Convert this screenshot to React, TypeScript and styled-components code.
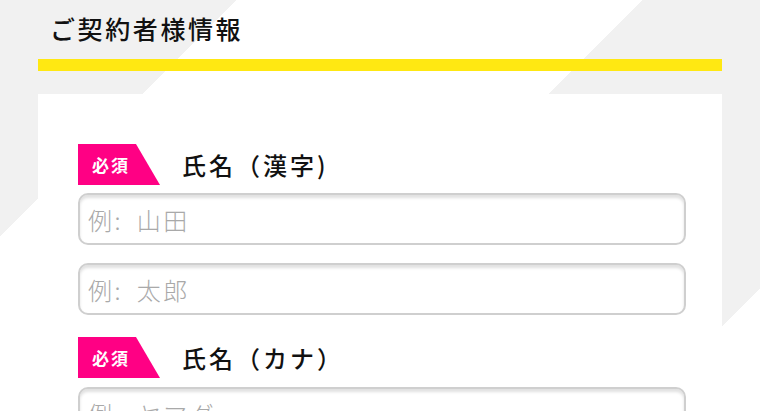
import React from "react";
import styled, { createGlobalStyle } from "styled-components";

const Global = createGlobalStyle`
  html, body { margin: 0; padding: 0; height: 100%; }
  body {
    font-family: "Noto Sans CJK JP", "Noto Sans", sans-serif;
    color: #111;
  }
  #root { height: 100%; }
`;

const Page = styled.div`
  height: 411px;
  overflow: hidden;
  background: linear-gradient(
    135deg,
    #f1f1f1 0%,
    #f1f1f1 20.2%,
    #ffffff 20.2%,
    #ffffff 54.9%,
    #f1f1f1 54.9%,
    #f1f1f1 89.5%,
    #ffffff 89.5%
  );
  padding: 0 38px;
  display: flex;
  flex-direction: column;
  & > * { flex-shrink: 0; }
`;

const Title = styled.h1`
  margin: 0;
  padding: 11px 0 0 12px;
  height: 59px;
  box-sizing: border-box;
  font-size: 25px;
  line-height: 34px;
  font-weight: 500;
  letter-spacing: 2.6px;
  color: #111;
`;

const Rule = styled.div`
  height: 12px;
  background: #ffe812;
`;

const Card = styled.section`
  margin-top: 23px;
  background: #fff;
  padding: 50px 36px 40px 40px;
  display: flex;
  flex-direction: column;
  & > * { flex-shrink: 0; }
`;

const LabelRow = styled.div<{ $top: number }>`
  display: flex;
  align-items: center;
  height: 41px;
  margin-top: ${(p) => p.$top}px;
`;

const Badge = styled.span`
  width: 82px;
  height: 41px;
  background: #ff0084;
  clip-path: polygon(0 0, 58px 0, 100% 100%, 0 100%);
  color: #fff;
  font-size: 17px;
  font-weight: 700;
  letter-spacing: 2px;
  line-height: 41px;
  padding-left: 14px;
  box-sizing: border-box;
`;

const Label = styled.span`
  margin-left: 22px;
  font-size: 24px;
  font-weight: 500;
  letter-spacing: 3px;
  color: #111;
`;

const Field = styled.input<{ $top: number }>`
  margin-top: ${(p) => p.$top}px;
  height: 52px;
  width: 100%;
  box-sizing: border-box;
  border: 2px solid #cfcfcf;
  border-radius: 10px;
  box-shadow: inset 0 3px 3px rgba(0, 0, 0, 0.12);
  padding: 0 8px;
  font-family: "Noto Sans CJK JP", sans-serif;
  font-size: 24px;
  font-weight: 300;
  letter-spacing: 2.5px;
  word-spacing: 6px;
  color: #333;
  background: #fff;
  outline: none;
  &::placeholder { color: #a9a9a9; }
`;

export default function App() {
  return (
    <>
      <Global />
      <Page>
        <Title>ご契約者様情報</Title>
        <Rule />
        <Card>
          <LabelRow $top={0}>
            <Badge>必須</Badge>
            <Label>氏名（漢字)</Label>
          </LabelRow>
          <Field $top={8} placeholder="例: 山田" />
          <Field $top={18} placeholder="例: 太郎" />
          <LabelRow $top={22}>
            <Badge>必須</Badge>
            <Label>氏名（カナ）</Label>
          </LabelRow>
          <Field $top={9} placeholder="例: ヤマダ" />
        </Card>
      </Page>
    </>
  );
}
